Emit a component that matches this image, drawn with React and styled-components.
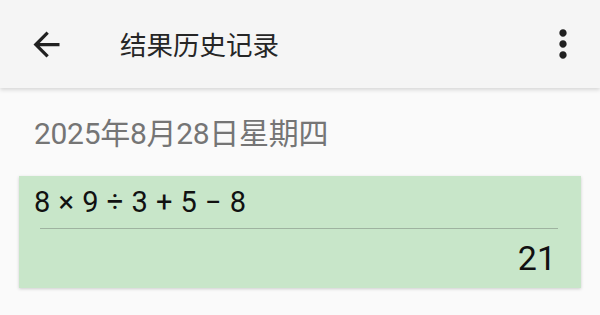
import React from "react";
import styled, { createGlobalStyle } from "styled-components";

const Global = createGlobalStyle`
  html, body {
    margin: 0;
    padding: 0;
    background: #fafafa;
  }
  body {
    font-family: Roboto, "Noto Sans CJK SC", sans-serif;
    width: 600px;
    height: 315px;
    overflow: hidden;
  }
`;

const Screen = styled.div`
  width: 600px;
  height: 315px;
  background: #fafafa;
  display: flex;
  flex-direction: column;
`;

const Toolbar = styled.header`
  height: 88px;
  flex-shrink: 0;
  background: #f5f5f5;
  box-shadow: 0 2px 4px rgba(0, 0, 0, 0.14);
  display: flex;
  align-items: center;
  position: relative;
  z-index: 1;
`;

const IconButton = styled.button`
  border: none;
  background: none;
  padding: 0;
  width: ${(p) => p.size}px;
  height: ${(p) => p.size}px;
  display: flex;
  align-items: center;
  justify-content: center;
  color: #212121;
  margin: ${(p) => p.margin || 0};
  svg {
    width: 100%;
    height: 100%;
    fill: currentColor;
  }
`;

const Title = styled.h1`
  margin: 0 0 0 54px;
  flex: 1;
  font-family: "Noto Sans CJK SC", sans-serif;
  font-weight: 400;
  font-size: 26.5px;
  color: #262626;
  line-height: 1;
`;

const Content = styled.main`
  padding: 26px 0 0;
  display: flex;
  flex-direction: column;
`;

const DateLabel = styled.div`
  height: 40px;
  line-height: 40px;
  padding-left: 34px;
  font-size: 30px;
  color: #757575;
  letter-spacing: -0.3px;
`;

const Card = styled.section`
  margin: 22px 19px 0;
  background: #c8e6c9;
  box-shadow: 0 1px 3px rgba(0, 0, 0, 0.18);
  display: flex;
  flex-direction: column;
`;

const Expression = styled.div`
  height: 52px;
  line-height: 52px;
  padding-left: 15px;
  font-size: 29px;
  color: #111;
  word-spacing: 1px;
`;

const Divider = styled.hr`
  margin: 0 23px 0 21px;
  border: none;
  height: 1px;
  background: #9fb3a0;
`;

const Result = styled.div`
  height: 59px;
  line-height: 59px;
  padding-right: 25px;
  text-align: right;
  font-size: 34px;
  color: #111;
`;

const BackIcon = () => (
  <svg viewBox="0 0 24 24">
    <path d="M20 11H7.83l5.59-5.59L12 4l-8 8 8 8 1.41-1.41L7.83 13H20v-2z" />
  </svg>
);

const MoreIcon = () => (
  <svg viewBox="0 0 24 24">
    <path d="M12 8c1.1 0 2-.9 2-2s-.9-2-2-2-2 .9-2 2 .9 2 2 2zm0 2c-1.1 0-2 .9-2 2s.9 2 2 2 2-.9 2-2-.9-2-2-2zm0 6c-1.1 0-2 .9-2 2s.9 2 2 2 2-.9 2-2-.9-2-2-2z" />
  </svg>
);

export default function App() {
  return (
    <>
      <Global />
      <Screen>
        <Toolbar>
          <IconButton size={39} margin="0 0 0 27px">
            <BackIcon />
          </IconButton>
          <Title>结果历史记录</Title>
          <IconButton size={44} margin="0 15px 0 0">
            <MoreIcon />
          </IconButton>
        </Toolbar>
        <Content>
          <DateLabel>2025年8月28日星期四</DateLabel>
          <Card>
            <Expression>8 × 9 ÷ 3 + 5 − 8</Expression>
            <Divider />
            <Result>21</Result>
          </Card>
        </Content>
      </Screen>
    </>
  );
}
